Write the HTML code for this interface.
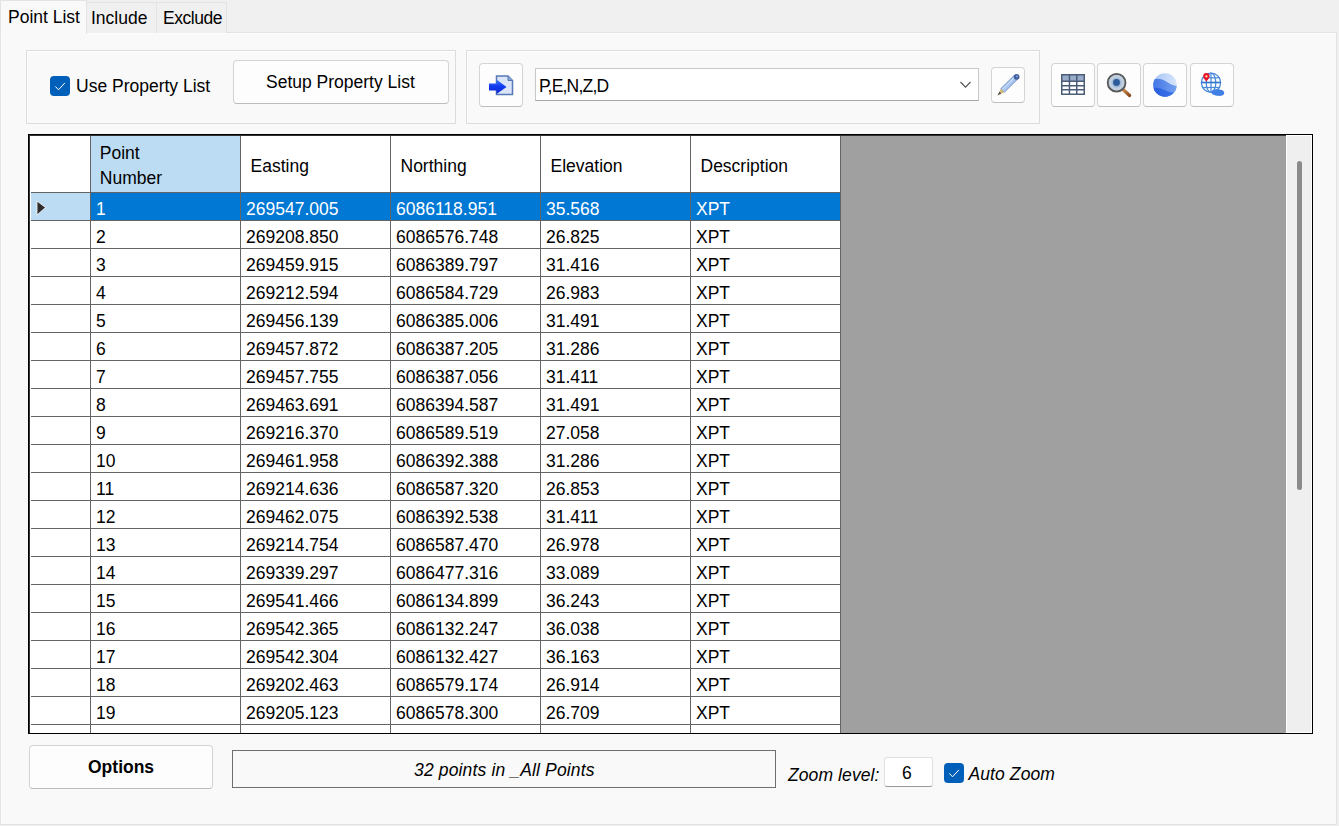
<!DOCTYPE html>
<html><head><meta charset="utf-8"><style>
html,body{margin:0;padding:0;}
body{width:1339px;height:826px;position:relative;overflow:hidden;background:#f0f0f0;font-family:"Liberation Sans",sans-serif;}
.t{position:absolute;white-space:nowrap;}
.btn{position:absolute;box-sizing:border-box;background:#fdfdfd;border:1px solid #d4d4d4;border-bottom-color:#bdbdbd;border-radius:4px;}
</style></head><body>
<div style="position:absolute;left:0px;top:32px;width:1337px;height:793px;box-sizing:border-box;background:#f9f9f9;border:1px solid #e3e3e3;box-shadow:inset 1px 1px 0 #fdfdfd;"></div>
<div style="position:absolute;left:86px;top:2px;width:71px;height:31px;box-sizing:border-box;background:#f0f0f0;border:1px solid #e3e3e3;border-bottom:none;"></div>
<div style="position:absolute;left:156px;top:2px;width:71px;height:31px;box-sizing:border-box;background:#f0f0f0;border:1px solid #e3e3e3;border-bottom:none;"></div>
<div style="position:absolute;left:0px;top:0px;width:87px;height:34px;box-sizing:border-box;background:#f9f9f9;border:1px solid #e3e3e3;border-bottom:none;"></div>
<div class="t" style="left:8px;top:7px;font-size:17.5px;line-height:20px;color:#000;">Point List</div>
<div class="t" style="left:91px;top:8px;font-size:17.5px;line-height:20px;color:#000;">Include</div>
<div class="t" style="left:163px;top:8px;font-size:17.5px;line-height:20px;color:#000;letter-spacing:-0.45px;">Exclude</div>
<div style="position:absolute;left:26px;top:50px;width:430px;height:74px;box-sizing:border-box;border:1px solid #dcdcdc;box-shadow:inset 1px 1px 0 #fff;"></div>
<div style="position:absolute;left:466px;top:50px;width:574px;height:74px;box-sizing:border-box;border:1px solid #dcdcdc;box-shadow:inset 1px 1px 0 #fff;"></div>
<div style="position:absolute;left:50px;top:76px;width:20px;height:20px;box-sizing:border-box;background:#005fb8;border-radius:4px;"></div>
<svg style="position:absolute;left:50px;top:76px" width="20" height="20"><path d="M5.3 10.4 L8.5 13.8 L14.9 6.9" fill="none" stroke="#fff" stroke-width="1.0"/></svg>
<div class="t" style="left:76px;top:76px;font-size:17.5px;line-height:20px;color:#000;">Use Property List</div>
<div class="btn" style="left:233px;top:60px;width:216px;height:44px;"></div>
<div class="t" style="left:266px;top:72px;font-size:17.5px;line-height:20px;color:#000;">Setup Property List</div>
<div class="btn" style="left:479px;top:63px;width:44px;height:44px;"></div>
<svg style="position:absolute;left:479px;top:63px" width="44" height="44">
<path d="M17.5 13 H29 L33.5 17.5 V31.5 H17.5 Z" fill="#dbe5f7" stroke="#5479b6" stroke-width="1.5"/>
<path d="M29 13 V17.5 H33.5" fill="#8aa6d8" stroke="#5479b6" stroke-width="1"/>
<defs><linearGradient id="ag" x1="0" y1="0" x2="0" y2="1"><stop offset="0" stop-color="#3a78ff"/><stop offset="0.5" stop-color="#1038f0"/><stop offset="1" stop-color="#0a28c8"/></linearGradient></defs>
<path d="M10 20.5 H17.5 V16.5 L27.5 24 L17.5 31 V27.5 H10 Z" fill="url(#ag)"/>
</svg>
<div style="position:absolute;left:535px;top:68px;width:444px;height:33px;box-sizing:border-box;background:#fff;border:1px solid #c8c8c8;border-bottom-color:#a8a8a8;"></div>
<div class="t" style="left:539px;top:76px;font-size:17.5px;line-height:20px;color:#000;letter-spacing:-0.8px;">P,E,N,Z,D</div>
<svg style="position:absolute;left:958px;top:80px" width="14" height="10"><path d="M2.5 2 L7.5 7.2 L12.5 2" fill="none" stroke="#505050" stroke-width="1.1"/></svg>
<div class="btn" style="left:991px;top:67px;width:34px;height:36px;"></div>
<svg style="position:absolute;left:991px;top:67px" width="34" height="36">
<path d="M13.25 25.28 L9.75 21.72 L22.85 8.82 L26.35 12.38 Z" fill="#a9c7f0" stroke="#6d8dc2" stroke-width="0.9"/>
<line x1="11.2" y1="22.6" x2="23.6" y2="10.4" stroke="#d4e4fa" stroke-width="1"/>
<circle cx="25.6" cy="9.8" r="2.9" fill="#3f5d9c"/>
<circle cx="25.9" cy="9.4" r="1.1" fill="#7f9ad0"/>
<path d="M6.5 28.4 L9.75 21.72 L13.25 25.28 Z" fill="#d8bd78"/>
<path d="M6.5 28.4 L8.36 24.58 L10.36 26.62 Z" fill="#5a5a5a"/>
</svg>
<div class="btn" style="left:1051px;top:63px;width:44px;height:44px;"></div>
<div class="btn" style="left:1097px;top:63px;width:44px;height:44px;"></div>
<div class="btn" style="left:1143px;top:63px;width:44px;height:44px;"></div>
<div class="btn" style="left:1190px;top:63px;width:44px;height:44px;"></div>
<svg style="position:absolute;left:1051px;top:63px" width="44" height="44">
<rect x="10" y="11" width="24" height="21" fill="#4b5c76"/>
<rect x="11.5" y="12.5" width="6.2" height="5" fill="#98abc8"/><rect x="11.5" y="19" width="6.2" height="3" fill="#fff"/><rect x="11.5" y="23.5" width="6.2" height="2.5" fill="#fff"/><rect x="11.5" y="27.5" width="6.2" height="3" fill="#fff"/><rect x="19.2" y="12.5" width="5.8" height="5" fill="#98abc8"/><rect x="19.2" y="19" width="5.8" height="3" fill="#fff"/><rect x="19.2" y="23.5" width="5.8" height="2.5" fill="#fff"/><rect x="19.2" y="27.5" width="5.8" height="3" fill="#fff"/><rect x="26.5" y="12.5" width="6" height="5" fill="#98abc8"/><rect x="26.5" y="19" width="6" height="3" fill="#fff"/><rect x="26.5" y="23.5" width="6" height="2.5" fill="#fff"/><rect x="26.5" y="27.5" width="6" height="3" fill="#fff"/>
</svg>
<svg style="position:absolute;left:1097px;top:63px" width="44" height="44">
<defs><radialGradient id="mg" cx="0.5" cy="0.5" r="0.5"><stop offset="0" stop-color="#4a7ab4"/><stop offset="0.42" stop-color="#9db6d6"/><stop offset="0.72" stop-color="#c8d5e2"/><stop offset="1" stop-color="#9fb0c6"/></radialGradient>
<linearGradient id="hg" x1="0" y1="0" x2="1" y2="1"><stop offset="0" stop-color="#d09050"/><stop offset="1" stop-color="#8a4a1e"/></linearGradient></defs>
<line x1="26" y1="26.5" x2="32.6" y2="32.4" stroke="url(#hg)" stroke-width="3.4" stroke-linecap="round"/>
<circle cx="19.6" cy="19.7" r="8.9" fill="url(#mg)" stroke="#585858" stroke-width="1.8"/>
<circle cx="19.5" cy="19.4" r="3.4" fill="#2b5b9a"/>
</svg>
<svg style="position:absolute;left:1143px;top:63px" width="44" height="44">
<defs><clipPath id="sc"><circle cx="22" cy="22" r="11.8"/></clipPath>
<linearGradient id="s1" x1="0" y1="0" x2="1" y2="0.3"><stop offset="0" stop-color="#a2c0f5"/><stop offset="1" stop-color="#dae7fb"/></linearGradient>
<linearGradient id="s2" x1="0" y1="0" x2="1" y2="0"><stop offset="0" stop-color="#3f74e6"/><stop offset="1" stop-color="#78a4f0"/></linearGradient>
<linearGradient id="s3" x1="0" y1="0" x2="1" y2="0"><stop offset="0" stop-color="#2a5cdc"/><stop offset="1" stop-color="#3c78ea"/></linearGradient></defs>
<g clip-path="url(#sc)">
<rect x="8" y="8" width="28" height="28" fill="url(#s1)"/>
<path d="M8 17 C14 15 18 15 24 19 C28 22 32 23 36 23 V36 H8 Z" fill="url(#s2)"/>
<path d="M8 25 C14 24 18 25 24 28 C28 30 32 30 36 29 V36 H8 Z" fill="url(#s3)"/>
</g>
</svg>
<svg style="position:absolute;left:1190px;top:63px" width="44" height="44">
<g fill="none" stroke="#4a8ada" stroke-width="1.25">
<circle cx="21" cy="19.7" r="9.6"/>
<ellipse cx="21" cy="19.7" rx="4.8" ry="9.6"/>
<line x1="21" y1="10" x2="21" y2="29.3"/>
<line x1="12" y1="14.8" x2="30" y2="14.8"/>
<line x1="12" y1="24.5" x2="30" y2="24.5"/>
</g>
<line x1="11.2" y1="19.5" x2="30.8" y2="19.5" stroke="#2e74cc" stroke-width="1.6"/>
<path d="M21.5 29 C22 26.5 25 26 28 26.3 C32 26.6 34.5 28 34.2 30.2 C34 32.2 31 33.2 28 32.8 C25 32.5 21 31.5 21.5 29 Z" fill="#3f7fe6"/>
<path d="M16.3 18.6 C14.5 16.3 13.2 14.8 13.2 13.3 A3.2 3.2 0 0 1 19.6 13.3 C19.6 14.8 18.2 16.3 16.3 18.6 Z" fill="#e8112a"/>
<circle cx="16.4" cy="13.4" r="1.1" fill="#ffe8a0"/>
</svg>
<div style="position:absolute;left:28px;top:134px;width:1285px;height:600px;box-sizing:border-box;background:#a0a0a0;border:1px solid #000;box-shadow:inset 1px 1px 0 #333;"></div>
<div style="position:absolute;left:1286px;top:135px;width:26px;height:598px;background:#efefef;border:1px solid #fff;box-sizing:border-box;"></div>
<div style="position:absolute;left:1297px;top:161px;width:5px;height:329px;background:#8a8a8a;border-radius:2.5px;"></div>
<div style="position:absolute;left:30px;top:136px;width:811px;height:597px;background:#fff;"></div>
<div style="position:absolute;left:91px;top:136px;width:149px;height:56px;background:#bcdcf4;"></div>
<div style="position:absolute;left:31px;top:193px;width:59px;height:27px;background:#bcdcf4;"></div>
<div style="position:absolute;left:91px;top:193px;width:749px;height:27px;background:#0078d4;"></div>
<div style="position:absolute;left:90px;top:136px;width:1px;height:597px;background:#646464;"></div>
<div style="position:absolute;left:240px;top:136px;width:1px;height:597px;background:#646464;"></div>
<div style="position:absolute;left:390px;top:136px;width:1px;height:597px;background:#646464;"></div>
<div style="position:absolute;left:540px;top:136px;width:1px;height:597px;background:#646464;"></div>
<div style="position:absolute;left:690px;top:136px;width:1px;height:597px;background:#646464;"></div>
<div style="position:absolute;left:840px;top:136px;width:1px;height:597px;background:#646464;"></div>
<div style="position:absolute;left:31px;top:192px;width:810px;height:1px;background:#646464;"></div>
<div style="position:absolute;left:31px;top:220px;width:810px;height:1px;background:#646464;"></div>
<div style="position:absolute;left:31px;top:248px;width:810px;height:1px;background:#646464;"></div>
<div style="position:absolute;left:31px;top:276px;width:810px;height:1px;background:#646464;"></div>
<div style="position:absolute;left:31px;top:304px;width:810px;height:1px;background:#646464;"></div>
<div style="position:absolute;left:31px;top:332px;width:810px;height:1px;background:#646464;"></div>
<div style="position:absolute;left:31px;top:360px;width:810px;height:1px;background:#646464;"></div>
<div style="position:absolute;left:31px;top:388px;width:810px;height:1px;background:#646464;"></div>
<div style="position:absolute;left:31px;top:416px;width:810px;height:1px;background:#646464;"></div>
<div style="position:absolute;left:31px;top:444px;width:810px;height:1px;background:#646464;"></div>
<div style="position:absolute;left:31px;top:472px;width:810px;height:1px;background:#646464;"></div>
<div style="position:absolute;left:31px;top:500px;width:810px;height:1px;background:#646464;"></div>
<div style="position:absolute;left:31px;top:528px;width:810px;height:1px;background:#646464;"></div>
<div style="position:absolute;left:31px;top:556px;width:810px;height:1px;background:#646464;"></div>
<div style="position:absolute;left:31px;top:584px;width:810px;height:1px;background:#646464;"></div>
<div style="position:absolute;left:31px;top:612px;width:810px;height:1px;background:#646464;"></div>
<div style="position:absolute;left:31px;top:640px;width:810px;height:1px;background:#646464;"></div>
<div style="position:absolute;left:31px;top:668px;width:810px;height:1px;background:#646464;"></div>
<div style="position:absolute;left:31px;top:696px;width:810px;height:1px;background:#646464;"></div>
<div style="position:absolute;left:31px;top:724px;width:810px;height:1px;background:#646464;"></div>
<svg style="position:absolute;left:30px;top:193px" width="30" height="27"><path d="M7 8 L15.5 14.5 L7 22 Z" fill="#2d2d2d" stroke="#fff" stroke-width="0.8"/></svg>
<div class="t" style="left:99.8px;top:143px;font-size:17.5px;line-height:20px;color:#000;">Point</div>
<div class="t" style="left:99.8px;top:168px;font-size:17.5px;line-height:20px;color:#000;">Number</div>
<div class="t" style="left:250.5px;top:156px;font-size:17.5px;line-height:20px;color:#000;">Easting</div>
<div class="t" style="left:400.5px;top:156px;font-size:17.5px;line-height:20px;color:#000;">Northing</div>
<div class="t" style="left:550.5px;top:156px;font-size:17.5px;line-height:20px;color:#000;">Elevation</div>
<div class="t" style="left:700.5px;top:156px;font-size:17.5px;line-height:20px;color:#000;">Description</div>
<div class="t" style="left:96px;top:199px;font-size:17.5px;line-height:20px;color:#fff;">1</div>
<div class="t" style="left:246px;top:199px;font-size:17.5px;line-height:20px;color:#fff;">269547.005</div>
<div class="t" style="left:396px;top:199px;font-size:17.5px;line-height:20px;color:#fff;">6086118.951</div>
<div class="t" style="left:546px;top:199px;font-size:17.5px;line-height:20px;color:#fff;">35.568</div>
<div class="t" style="left:696px;top:199px;font-size:17.5px;line-height:20px;color:#fff;">XPT</div>
<div class="t" style="left:96px;top:227px;font-size:17.5px;line-height:20px;color:#000;">2</div>
<div class="t" style="left:246px;top:227px;font-size:17.5px;line-height:20px;color:#000;">269208.850</div>
<div class="t" style="left:396px;top:227px;font-size:17.5px;line-height:20px;color:#000;">6086576.748</div>
<div class="t" style="left:546px;top:227px;font-size:17.5px;line-height:20px;color:#000;">26.825</div>
<div class="t" style="left:696px;top:227px;font-size:17.5px;line-height:20px;color:#000;">XPT</div>
<div class="t" style="left:96px;top:255px;font-size:17.5px;line-height:20px;color:#000;">3</div>
<div class="t" style="left:246px;top:255px;font-size:17.5px;line-height:20px;color:#000;">269459.915</div>
<div class="t" style="left:396px;top:255px;font-size:17.5px;line-height:20px;color:#000;">6086389.797</div>
<div class="t" style="left:546px;top:255px;font-size:17.5px;line-height:20px;color:#000;">31.416</div>
<div class="t" style="left:696px;top:255px;font-size:17.5px;line-height:20px;color:#000;">XPT</div>
<div class="t" style="left:96px;top:283px;font-size:17.5px;line-height:20px;color:#000;">4</div>
<div class="t" style="left:246px;top:283px;font-size:17.5px;line-height:20px;color:#000;">269212.594</div>
<div class="t" style="left:396px;top:283px;font-size:17.5px;line-height:20px;color:#000;">6086584.729</div>
<div class="t" style="left:546px;top:283px;font-size:17.5px;line-height:20px;color:#000;">26.983</div>
<div class="t" style="left:696px;top:283px;font-size:17.5px;line-height:20px;color:#000;">XPT</div>
<div class="t" style="left:96px;top:311px;font-size:17.5px;line-height:20px;color:#000;">5</div>
<div class="t" style="left:246px;top:311px;font-size:17.5px;line-height:20px;color:#000;">269456.139</div>
<div class="t" style="left:396px;top:311px;font-size:17.5px;line-height:20px;color:#000;">6086385.006</div>
<div class="t" style="left:546px;top:311px;font-size:17.5px;line-height:20px;color:#000;">31.491</div>
<div class="t" style="left:696px;top:311px;font-size:17.5px;line-height:20px;color:#000;">XPT</div>
<div class="t" style="left:96px;top:339px;font-size:17.5px;line-height:20px;color:#000;">6</div>
<div class="t" style="left:246px;top:339px;font-size:17.5px;line-height:20px;color:#000;">269457.872</div>
<div class="t" style="left:396px;top:339px;font-size:17.5px;line-height:20px;color:#000;">6086387.205</div>
<div class="t" style="left:546px;top:339px;font-size:17.5px;line-height:20px;color:#000;">31.286</div>
<div class="t" style="left:696px;top:339px;font-size:17.5px;line-height:20px;color:#000;">XPT</div>
<div class="t" style="left:96px;top:367px;font-size:17.5px;line-height:20px;color:#000;">7</div>
<div class="t" style="left:246px;top:367px;font-size:17.5px;line-height:20px;color:#000;">269457.755</div>
<div class="t" style="left:396px;top:367px;font-size:17.5px;line-height:20px;color:#000;">6086387.056</div>
<div class="t" style="left:546px;top:367px;font-size:17.5px;line-height:20px;color:#000;">31.411</div>
<div class="t" style="left:696px;top:367px;font-size:17.5px;line-height:20px;color:#000;">XPT</div>
<div class="t" style="left:96px;top:395px;font-size:17.5px;line-height:20px;color:#000;">8</div>
<div class="t" style="left:246px;top:395px;font-size:17.5px;line-height:20px;color:#000;">269463.691</div>
<div class="t" style="left:396px;top:395px;font-size:17.5px;line-height:20px;color:#000;">6086394.587</div>
<div class="t" style="left:546px;top:395px;font-size:17.5px;line-height:20px;color:#000;">31.491</div>
<div class="t" style="left:696px;top:395px;font-size:17.5px;line-height:20px;color:#000;">XPT</div>
<div class="t" style="left:96px;top:423px;font-size:17.5px;line-height:20px;color:#000;">9</div>
<div class="t" style="left:246px;top:423px;font-size:17.5px;line-height:20px;color:#000;">269216.370</div>
<div class="t" style="left:396px;top:423px;font-size:17.5px;line-height:20px;color:#000;">6086589.519</div>
<div class="t" style="left:546px;top:423px;font-size:17.5px;line-height:20px;color:#000;">27.058</div>
<div class="t" style="left:696px;top:423px;font-size:17.5px;line-height:20px;color:#000;">XPT</div>
<div class="t" style="left:96px;top:451px;font-size:17.5px;line-height:20px;color:#000;">10</div>
<div class="t" style="left:246px;top:451px;font-size:17.5px;line-height:20px;color:#000;">269461.958</div>
<div class="t" style="left:396px;top:451px;font-size:17.5px;line-height:20px;color:#000;">6086392.388</div>
<div class="t" style="left:546px;top:451px;font-size:17.5px;line-height:20px;color:#000;">31.286</div>
<div class="t" style="left:696px;top:451px;font-size:17.5px;line-height:20px;color:#000;">XPT</div>
<div class="t" style="left:96px;top:479px;font-size:17.5px;line-height:20px;color:#000;">11</div>
<div class="t" style="left:246px;top:479px;font-size:17.5px;line-height:20px;color:#000;">269214.636</div>
<div class="t" style="left:396px;top:479px;font-size:17.5px;line-height:20px;color:#000;">6086587.320</div>
<div class="t" style="left:546px;top:479px;font-size:17.5px;line-height:20px;color:#000;">26.853</div>
<div class="t" style="left:696px;top:479px;font-size:17.5px;line-height:20px;color:#000;">XPT</div>
<div class="t" style="left:96px;top:507px;font-size:17.5px;line-height:20px;color:#000;">12</div>
<div class="t" style="left:246px;top:507px;font-size:17.5px;line-height:20px;color:#000;">269462.075</div>
<div class="t" style="left:396px;top:507px;font-size:17.5px;line-height:20px;color:#000;">6086392.538</div>
<div class="t" style="left:546px;top:507px;font-size:17.5px;line-height:20px;color:#000;">31.411</div>
<div class="t" style="left:696px;top:507px;font-size:17.5px;line-height:20px;color:#000;">XPT</div>
<div class="t" style="left:96px;top:535px;font-size:17.5px;line-height:20px;color:#000;">13</div>
<div class="t" style="left:246px;top:535px;font-size:17.5px;line-height:20px;color:#000;">269214.754</div>
<div class="t" style="left:396px;top:535px;font-size:17.5px;line-height:20px;color:#000;">6086587.470</div>
<div class="t" style="left:546px;top:535px;font-size:17.5px;line-height:20px;color:#000;">26.978</div>
<div class="t" style="left:696px;top:535px;font-size:17.5px;line-height:20px;color:#000;">XPT</div>
<div class="t" style="left:96px;top:563px;font-size:17.5px;line-height:20px;color:#000;">14</div>
<div class="t" style="left:246px;top:563px;font-size:17.5px;line-height:20px;color:#000;">269339.297</div>
<div class="t" style="left:396px;top:563px;font-size:17.5px;line-height:20px;color:#000;">6086477.316</div>
<div class="t" style="left:546px;top:563px;font-size:17.5px;line-height:20px;color:#000;">33.089</div>
<div class="t" style="left:696px;top:563px;font-size:17.5px;line-height:20px;color:#000;">XPT</div>
<div class="t" style="left:96px;top:591px;font-size:17.5px;line-height:20px;color:#000;">15</div>
<div class="t" style="left:246px;top:591px;font-size:17.5px;line-height:20px;color:#000;">269541.466</div>
<div class="t" style="left:396px;top:591px;font-size:17.5px;line-height:20px;color:#000;">6086134.899</div>
<div class="t" style="left:546px;top:591px;font-size:17.5px;line-height:20px;color:#000;">36.243</div>
<div class="t" style="left:696px;top:591px;font-size:17.5px;line-height:20px;color:#000;">XPT</div>
<div class="t" style="left:96px;top:619px;font-size:17.5px;line-height:20px;color:#000;">16</div>
<div class="t" style="left:246px;top:619px;font-size:17.5px;line-height:20px;color:#000;">269542.365</div>
<div class="t" style="left:396px;top:619px;font-size:17.5px;line-height:20px;color:#000;">6086132.247</div>
<div class="t" style="left:546px;top:619px;font-size:17.5px;line-height:20px;color:#000;">36.038</div>
<div class="t" style="left:696px;top:619px;font-size:17.5px;line-height:20px;color:#000;">XPT</div>
<div class="t" style="left:96px;top:647px;font-size:17.5px;line-height:20px;color:#000;">17</div>
<div class="t" style="left:246px;top:647px;font-size:17.5px;line-height:20px;color:#000;">269542.304</div>
<div class="t" style="left:396px;top:647px;font-size:17.5px;line-height:20px;color:#000;">6086132.427</div>
<div class="t" style="left:546px;top:647px;font-size:17.5px;line-height:20px;color:#000;">36.163</div>
<div class="t" style="left:696px;top:647px;font-size:17.5px;line-height:20px;color:#000;">XPT</div>
<div class="t" style="left:96px;top:675px;font-size:17.5px;line-height:20px;color:#000;">18</div>
<div class="t" style="left:246px;top:675px;font-size:17.5px;line-height:20px;color:#000;">269202.463</div>
<div class="t" style="left:396px;top:675px;font-size:17.5px;line-height:20px;color:#000;">6086579.174</div>
<div class="t" style="left:546px;top:675px;font-size:17.5px;line-height:20px;color:#000;">26.914</div>
<div class="t" style="left:696px;top:675px;font-size:17.5px;line-height:20px;color:#000;">XPT</div>
<div class="t" style="left:96px;top:703px;font-size:17.5px;line-height:20px;color:#000;">19</div>
<div class="t" style="left:246px;top:703px;font-size:17.5px;line-height:20px;color:#000;">269205.123</div>
<div class="t" style="left:396px;top:703px;font-size:17.5px;line-height:20px;color:#000;">6086578.300</div>
<div class="t" style="left:546px;top:703px;font-size:17.5px;line-height:20px;color:#000;">26.709</div>
<div class="t" style="left:696px;top:703px;font-size:17.5px;line-height:20px;color:#000;">XPT</div>
<div class="btn" style="left:29px;top:745px;width:184px;height:44px;"></div>
<div class="t" style="left:88px;top:757px;font-size:17.5px;line-height:20px;color:#000;font-weight:bold;">Options</div>
<div style="position:absolute;left:232px;top:750px;width:544px;height:38px;box-sizing:border-box;border:1px solid #6e6e6e;"></div>
<div class="t" style="left:414px;top:760px;font-size:17.5px;line-height:20px;color:#000;font-style:italic;letter-spacing:0.15px;">32 points in _All Points</div>
<div class="t" style="left:788px;top:765px;font-size:17.5px;line-height:20px;color:#000;font-style:italic;letter-spacing:0.1px;">Zoom level:</div>
<div style="position:absolute;left:884px;top:757px;width:49px;height:30px;box-sizing:border-box;background:#fff;border:1px solid #e0e0e0;border-bottom-color:#9a9a9a;border-radius:3px;"></div>
<div class="t" style="left:902px;top:763px;font-size:17.5px;line-height:20px;color:#000;">6</div>
<div style="position:absolute;left:944px;top:763px;width:20px;height:20px;box-sizing:border-box;background:#005fb8;border-radius:4px;"></div>
<svg style="position:absolute;left:944px;top:763px" width="20" height="20"><path d="M5.3 10.4 L8.5 13.8 L14.9 6.9" fill="none" stroke="#fff" stroke-width="1.0"/></svg>
<div class="t" style="left:968.5px;top:763.5px;font-size:17.5px;line-height:20px;color:#000;font-style:italic;letter-spacing:0.1px;">Auto Zoom</div>
</body></html>
